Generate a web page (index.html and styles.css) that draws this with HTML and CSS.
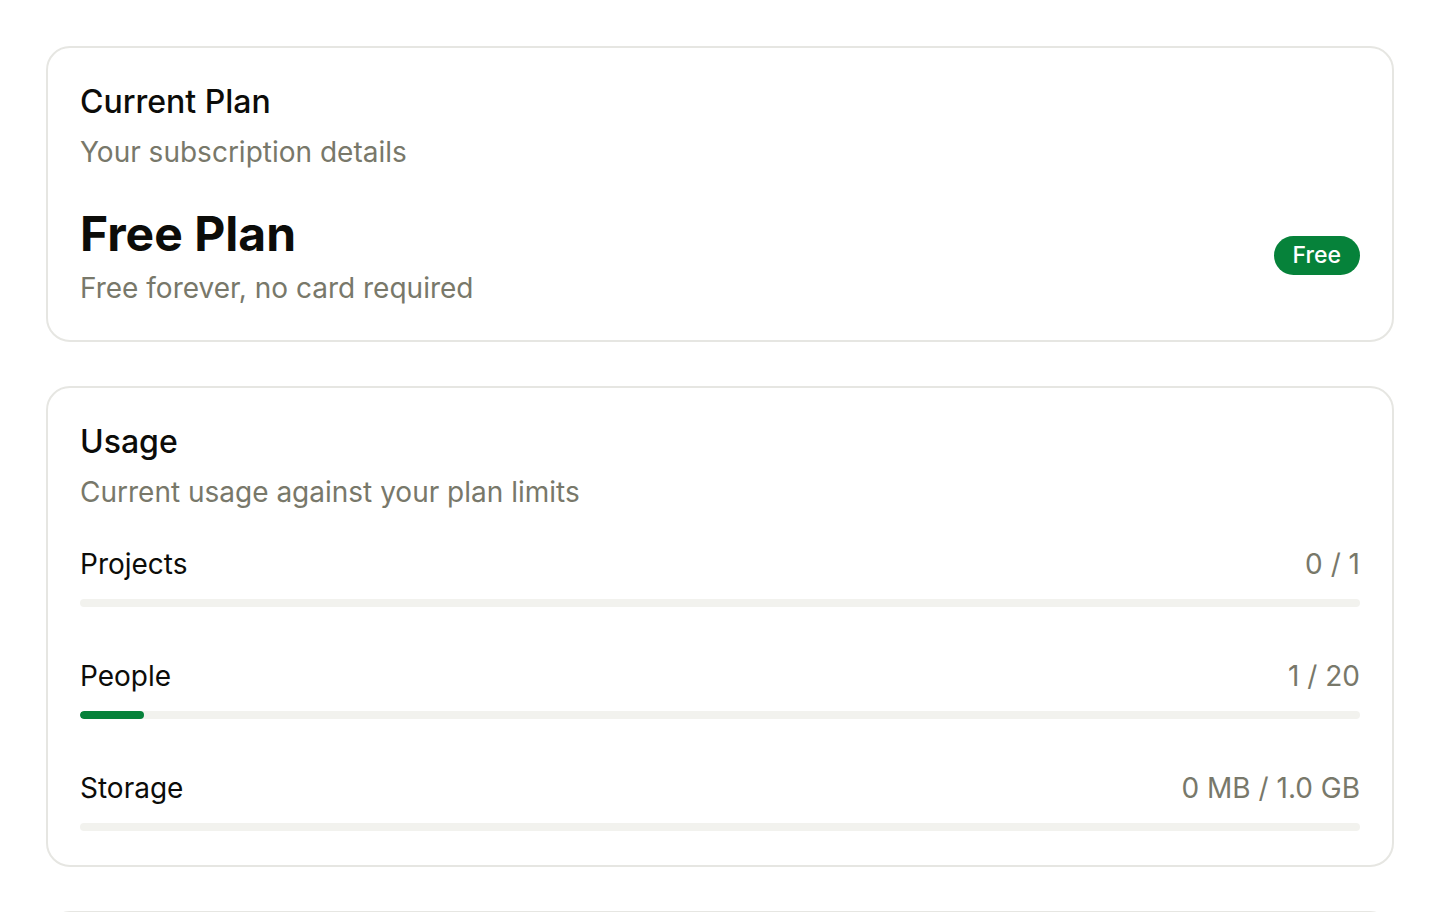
FILE: index.html
```html
<!DOCTYPE html>
<html lang="en">
  <head>
    <meta charset="UTF-8" />
    <meta name="viewport" content="width=device-width, initial-scale=1.0" />
    <title>Billing</title>
    <link rel="stylesheet" href="styles.css">
  </head>
  <body>
    <main class="page">
      <section class="card">
        <div class="card-header">
          <h2 class="card-title">Current Plan</h2>
          <p class="card-desc">Your subscription details</p>
        </div>
        <div class="plan-row">
          <div class="plan-info">
            <div class="plan-name">Free Plan</div>
            <div class="plan-note">Free forever, no card required</div>
          </div>
          <span class="badge">Free</span>
        </div>
      </section>

      <section class="card">
        <div class="card-header">
          <h2 class="card-title">Usage</h2>
          <p class="card-desc">Current usage against your plan limits</p>
        </div>
        <div class="usage-list">
          <div class="usage-item">
            <div class="usage-line">
              <span class="usage-label">Projects</span>
              <span class="usage-value">0 / 1</span>
            </div>
            <div class="bar"><div class="bar-fill" style="width: 0%"></div></div>
          </div>
          <div class="usage-item">
            <div class="usage-line">
              <span class="usage-label">People</span>
              <span class="usage-value">1 / 20</span>
            </div>
            <div class="bar"><div class="bar-fill" style="width: 5%"></div></div>
          </div>
          <div class="usage-item">
            <div class="usage-line">
              <span class="usage-label">Storage</span>
              <span class="usage-value">0 MB / 1.0 GB</span>
            </div>
            <div class="bar"><div class="bar-fill" style="width: 0%"></div></div>
          </div>
        </div>
      </section>

      <section class="card">
        <div class="card-header">
          <h2 class="card-title">Billing</h2>
          <p class="card-desc">Manage your payment method</p>
        </div>
      </section>
    </main>
  </body>
</html>
```

FILE: styles.css
```css
body {
  margin: 0;
  font-family: Inter, "Noto Sans", sans-serif;
  background: #ffffff;
  color: #0c0c09;
}

.page {
  padding: 46px 46px;
  display: flex;
  flex-direction: column;
  gap: 44px;
}

.card {
  border: 2px solid #e6e6e2;
  border-radius: 24px;
  padding: 36px 32px 34px;
  background: #fff;
}

.card-header {
  display: flex;
  flex-direction: column;
  gap: 14px;
}

.card-title {
  margin: 0;
  font-size: 32px;
  line-height: 36px;
  font-weight: 500;
}

.card-desc {
  margin: 0;
  font-size: 28px;
  line-height: 36px;
  color: #78786a;
}

.plan-row {
  margin-top: 36px;
  display: flex;
  align-items: center;
  justify-content: space-between;
}

.plan-info {
  display: flex;
  flex-direction: column;
  gap: 8px;
}

.plan-name {
  font-size: 48px;
  line-height: 56px;
  font-weight: 700;
}

.plan-note {
  font-size: 28px;
  line-height: 36px;
  color: #78786a;
}

.badge {
  background: #06823a;
  color: #fff;
  font-size: 23px;
  font-weight: 500;
  line-height: 39px;
  padding: 0 19px;
  border-radius: 999px;
  margin-bottom: 2px;
}

.usage-list {
  margin-top: 36px;
  display: flex;
  flex-direction: column;
  gap: 51px;
}

.usage-line {
  display: flex;
  justify-content: space-between;
  align-items: center;
  font-size: 28px;
  line-height: 36px;
}

.usage-value {
  color: #78786a;
}

.bar {
  margin-top: 17px;
  height: 8px;
  border-radius: 4px;
  background: #f2f2ee;
  overflow: hidden;
}

.bar-fill {
  height: 100%;
  background: #06823a;
  border-radius: 4px;
}
```
